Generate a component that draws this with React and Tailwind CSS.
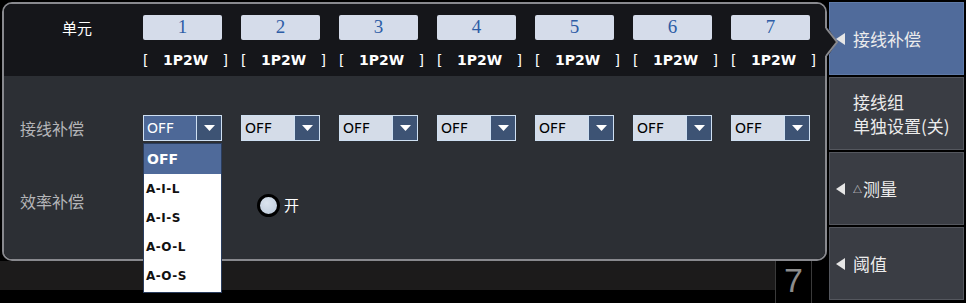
import React from "react";

const units = [1, 2, 3, 4, 5, 6, 7];
const options = ["A-I-L", "A-I-S", "A-O-L", "A-O-S"];

const cjk = { fontFamily: '"Noto Sans CJK SC", "Noto Sans", sans-serif' };
const latin = { fontFamily: '"DejaVu Sans", "Noto Sans CJK SC", sans-serif' };

function Arrow() {
  return (
    <svg width="10" height="12" viewBox="0 0 10 12" className="shrink-0">
      <path d="M9 0 L0 6 L9 12 Z" fill="#e6e6e6" />
    </svg>
  );
}

function Select({ active }) {
  return (
    <div className="flex h-[26px] w-[79px] border border-[#cfe0f2]">
      <div
        className={
          "flex flex-1 items-center pl-[3px] text-[14px] " +
          (active ? "bg-[#4d6897] text-white" : "bg-[#d4dce8] text-black")
        }
        style={latin}
      >
        OFF
      </div>
      <div className="flex w-[25px] items-center justify-center border-l border-[#cfe0f2] bg-[#3d5374]">
        <svg width="11" height="6" viewBox="0 0 11 6">
          <path d="M0 0 L11 0 L5.5 6 Z" fill="#ffffff" />
        </svg>
      </div>
    </div>
  );
}

function MenuButton({ selected, children }) {
  return (
    <div
      className={
        "flex h-[73px] items-center gap-[7px] border pl-[6px] text-[17px] text-[#ececec] " +
        (selected ? "border-[#5f7aa8] bg-[#506b9b]" : "border-[#54575e] bg-[#3a3d44]")
      }
      style={cjk}
    >
      {children}
    </div>
  );
}

export default function App() {
  return (
    <div className="relative flex h-[303px] w-[966px] overflow-hidden bg-black">
      {/* left area */}
      <div className="flex w-[828px] flex-col">
        <div className="relative z-10 ml-[2px] mt-[2px] h-[259px] w-[825px] rounded-[10px] border-2 border-[#88898e]">
          <div className="flex h-full flex-col overflow-hidden rounded-[8px]">
            {/* header */}
            <div className="h-[72px] bg-[#15161a] pt-[11px]">
              <div className="flex">
                <div className="w-[139px] pl-[58px] pt-[1px] text-[15px] leading-[24px] text-white" style={cjk}>
                  单元
                </div>
                <div className="flex gap-[19px]">
                  {units.map((u) => (
                    <div
                      key={u}
                      className="flex h-[25px] w-[79px] items-center justify-center rounded-[2px] bg-[#d5dcea] text-[19px] text-[#2d5ca6]"
                      style={{ fontFamily: '"Liberation Serif", serif' }}
                    >
                      {u}
                    </div>
                  ))}
                </div>
              </div>
              <div className="mt-[10px] flex pl-[139px]">
                <div className="flex gap-[19px]">
                  {units.map((u) => (
                    <div
                      key={u}
                      className="flex w-[79px] items-center justify-between text-[14px] font-bold leading-[20px] text-white"
                      style={latin}
                    >
                      <span className="font-normal">[</span>
                      <span>1P2W</span>
                      <span className="-mr-[6px] font-normal">]</span>
                    </div>
                  ))}
                </div>
              </div>
            </div>
            {/* body */}
            <div className="flex-1 bg-[#2c2f34]">
              <div className="mt-[39px] flex items-center">
                <div className="w-[139px] pl-[16px] text-[16px] text-[#b4b5b8]" style={cjk}>
                  接线补偿
                </div>
                <div className="flex gap-[19px]">
                  {units.map((u) => (
                    <Select key={u} active={u === 1} />
                  ))}
                </div>
              </div>
              <div className="mt-[43px] flex items-center">
                <div className="w-[139px] pl-[16px] text-[16px] text-[#b4b5b8]" style={cjk}>
                  效率补偿
                </div>
                <div className="ml-[114px] mt-[10px] flex items-center gap-[4px]">
                  <div className="h-[23px] w-[23px] rounded-full border-[3px] border-black bg-[radial-gradient(circle_at_40%_35%,#dbe4ee,#b9c7d8)]" />
                  <span className="text-[15px] text-white" style={cjk}>
                    开
                  </span>
                </div>
              </div>
            </div>
          </div>
          {/* pointer notch */}
          <svg className="absolute left-[821px] top-[22px]" width="14" height="32" viewBox="0 0 14 32">
            <path d="M0 2 L3 2 L12 16 L3 30 L0 30 Z" fill="#15161a" />
            <path d="M1 2 L12 16 L1 30" fill="none" stroke="#88898e" strokeWidth="2" />
          </svg>
        </div>
        {/* bottom strip */}
        <div className="flex h-[42px]">
          <div className="h-[29px] w-[775px] bg-[#1c1b1b]" />
          <div
            className="-mt-[4px] flex h-[46px] w-[37px] items-center justify-center border-x border-[#3a3a3a] text-[34px] leading-none text-[#8c8c8c]"
            style={{ fontFamily: '"Liberation Sans", sans-serif' }}
          >
            7
          </div>
        </div>
      </div>

      {/* right menu */}
      <div className="ml-[1px] mt-[2px] flex w-[135px] flex-col gap-[2px]">
        <MenuButton selected>
          <Arrow />
          <span>接线补偿</span>
        </MenuButton>
        <div
          className="flex h-[73px] flex-col justify-center border border-[#54575e] bg-[#3a3d44] pl-[23px] text-[17px] leading-[24px] text-[#ececec]"
          style={cjk}
        >
          <span>接线组</span>
          <span>单独设置(关)</span>
        </div>
        <MenuButton>
          <Arrow />
          <span className="flex items-center">
            <span className="mr-[1px] mt-[2px] text-[9px] leading-none">△</span>
            测量
          </span>
        </MenuButton>
        <MenuButton>
          <Arrow />
          <span>阈值</span>
        </MenuButton>
      </div>

      {/* open dropdown list */}
      <div className="absolute left-[143px] top-[143px] z-20 h-[150px] w-[79px] border border-[#2a3d5e] bg-white">
        <div
          className="flex h-[30px] items-center bg-[#4f6a9a] pl-[3px] text-[14px] font-bold text-white"
          style={latin}
        >
          OFF
        </div>
        {options.map((o) => (
          <div
            key={o}
            className="flex h-[29px] items-center pl-[2px] text-[12px] font-bold tracking-[0.5px] text-[#111]"
            style={latin}
          >
            {o}
          </div>
        ))}
      </div>
    </div>
  );
}
